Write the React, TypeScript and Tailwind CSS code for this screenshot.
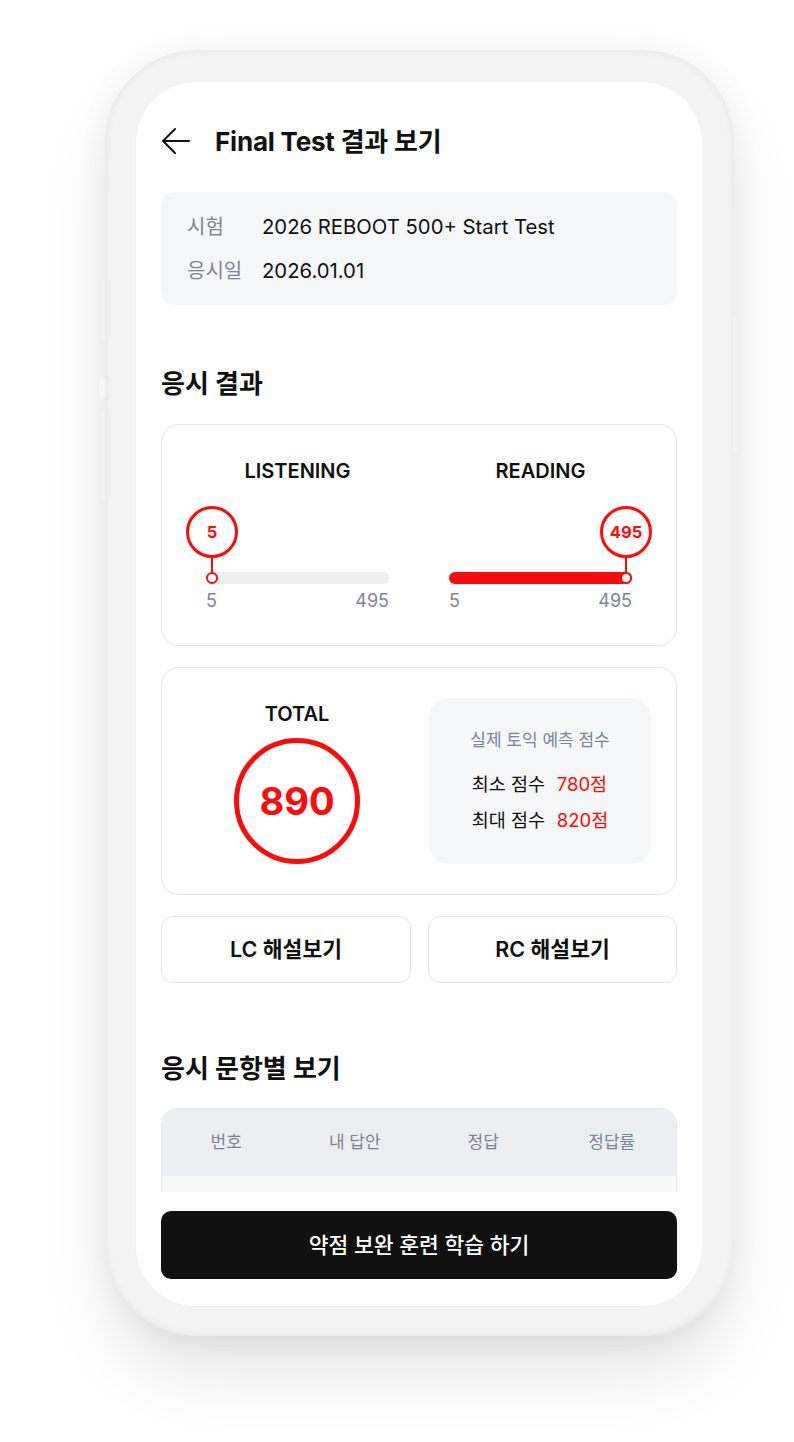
import React from "react";

const FONT = { fontFamily: 'Inter, "Noto Sans CJK KR", sans-serif' };

function Slider({ value, min, max }: { value: number; min: number; max: number }) {
  const pct = (value - min) / (max - min);
  const trackW = 183;
  const knobX = 6 + pct * (trackW - 12);
  return (
    <div className="w-[183px]">
      <div className="relative h-[66px]">
        <div
          className="absolute top-0 flex flex-col items-center"
          style={{ left: knobX - 26 }}
        >
          <div className="w-[52px] h-[52px] rounded-full border-[3px] border-[#ff0a0a] bg-white flex items-center justify-center text-[16.5px] font-bold text-[#ff0a0a] leading-none">
            {value}
          </div>
          <div className="w-[2px] h-[14px] bg-[#ff0a0a]" />
        </div>
      </div>
      <div className="relative h-[12px] rounded-full bg-[#edeef2]">
        <div
          className="absolute left-0 top-0 h-[12px] rounded-full bg-[#ff0a0a]"
          style={{ width: pct === 0 ? 0 : knobX + 6 }}
        />
        <div
          className="absolute top-0 w-[12px] h-[12px] rounded-full border-[2.5px] border-[#ff0a0a] bg-white"
          style={{ left: knobX - 6 }}
        />
      </div>
      <div className="mt-[7px] flex justify-between text-[18px] leading-[20px] text-[#7c8595]">
        <span>{min}</span>
        <span>{max}</span>
      </div>
    </div>
  );
}

export default function App() {
  return (
    <div className="w-[794px] h-[1442px] bg-white overflow-hidden" style={FONT}>
      <div className="pt-[50px] pl-[105px]">
        <div className="relative w-[629px] h-[1286px] rounded-[92px] bg-[#f3f3f4] pt-[32px] pl-[31px] shadow-[0_40px_70px_-10px_rgba(0,0,0,0.13),0_0_30px_rgba(0,0,0,0.05),inset_0_0_8px_rgba(0,0,0,0.07)]">
          <div className="absolute -right-[4px] top-[267px] w-[5px] h-[136px] rounded-r-[3px] bg-[#f1f1f2]" />
          <div className="absolute -left-[6px] top-[328px] w-[6px] h-[20px] rounded-l-[3px] bg-[#f6f6f7]" />
          <div className="absolute -left-[4px] top-[230px] w-[4px] h-[60px] rounded-l-[3px] bg-[#f1f1f2]" />
          <div className="absolute -left-[4px] top-[360px] w-[4px] h-[90px] rounded-l-[3px] bg-[#f1f1f2]" />
          <div className="w-[566px] h-[1224px] rounded-[60px] bg-white overflow-hidden flex flex-col shadow-[0_0_2px_rgba(0,0,0,0.05)]">
            <div className="flex-1 overflow-hidden px-[25px] pt-[32px]">
              {/* Header */}
              <div className="h-[54px] flex items-center">
                <svg width="30" height="28" viewBox="0 0 30 28" fill="none" className="shrink-0">
                  <path d="M28 14H2M14 2L2 14L14 26" stroke="#111" strokeWidth="2" strokeLinecap="round" strokeLinejoin="round" />
                </svg>
                <h1 className="ml-[24px] text-[26px] font-bold text-[#111] tracking-[-0.2px]">Final Test 결과 보기</h1>
              </div>

              {/* Info */}
              <div className="mt-[24px] rounded-[14px] bg-[#f5f6f8] pt-[21px] pb-[20px] pl-[26px] flex flex-col gap-[16px]">
                <div className="flex items-center h-[28px] text-[20px]">
                  <span className="w-[75px] text-[#7c8595]">시험</span>
                  <span className="text-[#111] text-[20.3px]">2026 REBOOT 500+ Start Test</span>
                </div>
                <div className="flex items-center h-[28px] text-[20px]">
                  <span className="w-[75px] text-[#7c8595]">응시일</span>
                  <span className="text-[#111] text-[20.3px]">2026.01.01</span>
                </div>
              </div>

              {/* Result heading */}
              <h2 className="mt-[63px] h-[32px] leading-[32px] text-[26px] font-bold text-[#111]">응시 결과</h2>

              {/* LR card */}
              <div className="mt-[24px] rounded-[18px] border border-[#e3e6eb] pt-[34px] pb-[34px] px-[44px] flex gap-[60px]">
                <div className="flex flex-col items-center">
                  <div className="h-[24px] leading-[24px] text-[20px] font-semibold text-[#111]">LISTENING</div>
                  <div className="mt-[23px]">
                    <Slider value={5} min={5} max={495} />
                  </div>
                </div>
                <div className="flex flex-col items-center">
                  <div className="h-[24px] leading-[24px] text-[20px] font-semibold text-[#111]">READING</div>
                  <div className="mt-[23px]">
                    <Slider value={495} min={5} max={495} />
                  </div>
                </div>
              </div>

              {/* Total card */}
              <div className="mt-[21px] rounded-[18px] border border-[#e3e6eb] py-[30px] pr-[25px] flex">
                <div className="flex-1 pl-[3px] flex flex-col items-center">
                  <div className="mt-[4px] h-[24px] leading-[24px] text-[20px] font-semibold text-[#111]">TOTAL</div>
                  <div className="mt-[12px] w-[126px] h-[126px] rounded-full border-[5px] border-[#ff0a0a] flex items-center justify-center">
                    <span className="text-[38px] font-bold text-[#ff0a0a] leading-none">890</span>
                  </div>
                </div>
                <div className="w-[222px] rounded-[20px] bg-[#f5f6f8] pt-[31px] pb-[31px] flex flex-col items-center">
                  <div className="h-[22px] leading-[22px] text-[17px] text-[#7c8595]">실제 토익 예측 점수</div>
                  <div className="mt-[22px] flex flex-col gap-[12px]">
                    <div className="flex items-center h-[24px] text-[18.5px]">
                      <span className="w-[85px] text-[#111]">최소 점수</span>
                      <span className="text-[#ff0a0a]">780점</span>
                    </div>
                    <div className="flex items-center h-[24px] text-[18.5px]">
                      <span className="w-[85px] text-[#111]">최대 점수</span>
                      <span className="text-[#ff0a0a]">820점</span>
                    </div>
                  </div>
                </div>
              </div>

              {/* Buttons */}
              <div className="mt-[21px] flex gap-[17px]">
                <button className="w-[251px] h-[67px] rounded-[12px] border border-[#e3e6eb] bg-white text-[21.5px] font-semibold text-[#111]">LC 해설보기</button>
                <button className="w-[250px] h-[67px] rounded-[12px] border border-[#e3e6eb] bg-white text-[21.5px] font-semibold text-[#111]">RC 해설보기</button>
              </div>

              {/* By question */}
              <h2 className="mt-[70px] h-[32px] leading-[32px] text-[26px] font-bold text-[#111]">응시 문항별 보기</h2>
              <div className="mt-[23px] rounded-t-[16px] border border-[#e6e8ec] overflow-hidden">
                <div className="h-[67px] bg-[#eceef2] grid grid-cols-4 items-center text-center text-[17px] text-[#7c8595]">
                  <span>번호</span>
                  <span>내 답안</span>
                  <span>정답</span>
                  <span>정답률</span>
                </div>
                <div className="h-[60px] bg-[#f5f6f8]" />
              </div>
            </div>

            {/* Bottom bar */}
            <div className="h-[114px] shrink-0 bg-white px-[25px] pt-[19px]">
              <button className="w-full h-[68px] rounded-[10px] bg-[#111111] text-white text-[21.5px] font-medium">약점 보완 훈련 학습 하기</button>
            </div>
          </div>
        </div>
      </div>
    </div>
  );
}
